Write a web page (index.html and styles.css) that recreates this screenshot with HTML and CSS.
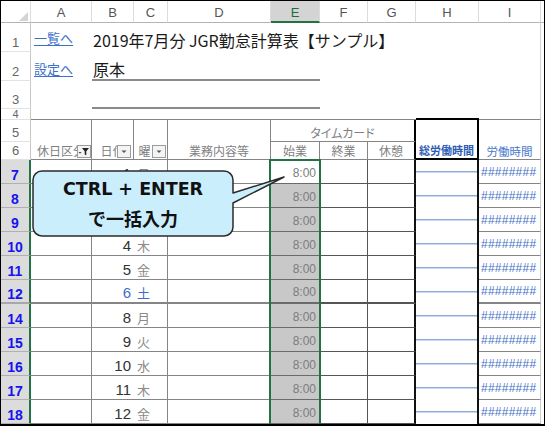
FILE: index.html
```html
<!DOCTYPE html>
<html lang="ja">
<head>
<meta charset="utf-8">
<title>JGR勤怠計算表</title>
<link rel="stylesheet" href="styles.css">
</head>
<body>
<div class="frame">
  <div class="sheet">
    <div class="row">
      <div class="ch corner"><svg width="9" height="9" viewBox="0 0 9 9"><polygon points="9,0 9,9 0,9" fill="#d4d4d4"/></svg></div>
      <div class="ch">A</div>
      <div class="ch">B</div>
      <div class="ch">C</div>
      <div class="ch">D</div>
      <div class="ch sel">E</div>
      <div class="ch">F</div>
      <div class="ch">G</div>
      <div class="ch">H</div>
      <div class="ch">I</div>
      <div class="ch last"></div>
    </div>

    <div class="row r1">
      <div class="rh">1</div>
      <div class="lk"><span>一覧へ</span></div>
      <div class="big sp7">2019年7月分 JGR勤怠計算表【サンプル】</div>
      <div class="ie"></div>
      <div class="j"></div>
    </div>
    <div class="row r2">
      <div class="rh">2</div>
      <div class="lk"><span>設定へ</span></div>
      <div class="big sp4 ul">原本</div>
      <div class="sp3"></div>
      <div class="ie"></div>
      <div class="j"></div>
    </div>
    <div class="row r3">
      <div class="rh">3</div>
      <div></div>
      <div class="sp4 ul"></div>
      <div class="sp3"></div>
      <div class="ie"></div>
      <div class="j"></div>
    </div>
    <div class="row r4">
      <div class="rh small">4</div>
      <div class="sp7 topline"></div>
      <div class="boxtop"></div>
      <div class="ie topline"></div>
      <div class="j"></div>
    </div>

    <div class="row">
      <div class="rh">5</div>
      <div class="hd rs2">休日区分<span class="fb"><svg width="12" height="11" viewBox="0 0 12 11"><polygon points="4,2 11,2 8.3,5.3 8.3,9.2 6.7,8.4 6.7,5.3" fill="#222"/><polygon points="0.5,6 3.5,6 2,7.8" fill="#444"/></svg></span></div>
      <div class="hd rs2">日付<span class="fb fb-b"><svg width="12" height="11" viewBox="0 0 12 11"><polygon points="3.5,4.5 8.5,4.5 6,7" fill="#555"/></svg></span></div>
      <div class="hd rs2">曜日<span class="fb fb-c"><svg width="12" height="11" viewBox="0 0 12 11"><polygon points="3.5,4.5 8.5,4.5 6,7" fill="#555"/></svg></span></div>
      <div class="hd rs2">業務内容等</div>
      <div class="hd sp3 tk">タイムカード</div>
      <div class="hd rs2 tot">総労働時間</div>
      <div class="hd rs2 lab">労働時間</div>
      <div class="j rs2"></div>
    </div>
    <div class="row">
      <div class="rh">6</div>
      <div class="hd">始業</div>
      <div class="hd">終業</div>
      <div class="hd tk">休憩</div>
    </div>

    <div class="row">
      <div class="rh on">7</div>
      <div class="d a"></div><div class="d b">1</div><div class="d w">月</div><div class="d dd"></div>
      <div class="d e first">8:00</div><div class="d f"></div><div class="d g"></div><div class="h"></div>
      <div class="d i">########</div><div class="j"></div>
    </div>
    <div class="row">
      <div class="rh on">8</div>
      <div class="d a"></div><div class="d b">2</div><div class="d w">火</div><div class="d dd"></div>
      <div class="d e">8:00</div><div class="d f"></div><div class="d g"></div><div class="h"></div>
      <div class="d i">########</div><div class="j"></div>
    </div>
    <div class="row">
      <div class="rh on">9</div>
      <div class="d a"></div><div class="d b">3</div><div class="d w">水</div><div class="d dd"></div>
      <div class="d e">8:00</div><div class="d f"></div><div class="d g"></div><div class="h"></div>
      <div class="d i">########</div><div class="j"></div>
    </div>
    <div class="row">
      <div class="rh on">10</div>
      <div class="d a"></div><div class="d b">4</div><div class="d w">木</div><div class="d dd"></div>
      <div class="d e">8:00</div><div class="d f"></div><div class="d g"></div><div class="h"></div>
      <div class="d i">########</div><div class="j"></div>
    </div>
    <div class="row">
      <div class="rh on">11</div>
      <div class="d a"></div><div class="d b">5</div><div class="d w">金</div><div class="d dd"></div>
      <div class="d e">8:00</div><div class="d f"></div><div class="d g"></div><div class="h"></div>
      <div class="d i">########</div><div class="j"></div>
    </div>
    <div class="row sat r12">
      <div class="rh on">12</div>
      <div class="d a"></div><div class="d b">6</div><div class="d w">土</div><div class="d dd"></div>
      <div class="d e">8:00</div><div class="d f"></div><div class="d g"></div><div class="h"></div>
      <div class="d i">########</div><div class="j"></div>
    </div>
    <div class="row">
      <div class="rh on">14</div>
      <div class="d a"></div><div class="d b">8</div><div class="d w">月</div><div class="d dd"></div>
      <div class="d e">8:00</div><div class="d f"></div><div class="d g"></div><div class="h"></div>
      <div class="d i">########</div><div class="j"></div>
    </div>
    <div class="row">
      <div class="rh on">15</div>
      <div class="d a"></div><div class="d b">9</div><div class="d w">火</div><div class="d dd"></div>
      <div class="d e">8:00</div><div class="d f"></div><div class="d g"></div><div class="h"></div>
      <div class="d i">########</div><div class="j"></div>
    </div>
    <div class="row">
      <div class="rh on">16</div>
      <div class="d a"></div><div class="d b">10</div><div class="d w">水</div><div class="d dd"></div>
      <div class="d e">8:00</div><div class="d f"></div><div class="d g"></div><div class="h"></div>
      <div class="d i">########</div><div class="j"></div>
    </div>
    <div class="row">
      <div class="rh on">17</div>
      <div class="d a"></div><div class="d b">11</div><div class="d w">木</div><div class="d dd"></div>
      <div class="d e">8:00</div><div class="d f"></div><div class="d g"></div><div class="h"></div>
      <div class="d i">########</div><div class="j"></div>
    </div>
    <div class="row last-row">
      <div class="rh on">18</div>
      <div class="d a"></div><div class="d b">12</div><div class="d w">金</div><div class="d dd"></div>
      <div class="d e">8:00</div><div class="d f"></div><div class="d g"></div><div class="h"></div>
      <div class="d i">########</div><div class="j"></div>
    </div>
  </div>

  <div class="selbox"></div>

  <div class="callout">
    <svg class="bubble" width="256" height="70" viewBox="0 0 256 70">
      <path d="M10,1 H192 A9,9 0 0 1 201,10 V23 L252,7 L201,33 V57 A9,9 0 0 1 192,66 H10 A9,9 0 0 1 1,57 V10 A9,9 0 0 1 10,1 Z" fill="#cbeefc" stroke="#2a2a2a" stroke-width="1.5" stroke-linejoin="round"/>
    </svg>
    <div class="bubble-text">
      <span class="en">CTRL + ENTER</span>
      <span class="ja">で一括入力</span>
    </div>
  </div>
</div>
</body>
</html>
```

FILE: styles.css
```css
* { box-sizing: border-box; margin: 0; padding: 0; }
html, body { background: #fff; }
body {
  width: 545px;
  height: 426px;
  overflow: hidden;
  font-family: "Noto Sans CJK JP", "Noto Sans", sans-serif;
  color: #222;
}

.frame {
  position: relative;
  width: 545px;
  height: 426px;
  border: 1px solid #000;
  border-bottom-width: 2px;
  overflow: hidden;
}

.sheet {
  display: grid;
  grid-template-columns: 30px 61px 42px 34px 103px 49px 48px 48px 63px 62px 3px;
  grid-template-rows: 22px 29px 29px 28px 11px 22px 18px repeat(11, 24px);
}
.row { display: contents; }
.row > div {
  display: flex;
  min-width: 0;
  overflow: hidden;
  white-space: nowrap;
}

.sp7 { grid-column: span 7; }
.sp4 { grid-column: span 4; }
.sp3 { grid-column: span 3; }
.rs2 { grid-row: span 2; }

/* column headers */
.ch {
  align-items: flex-end;
  justify-content: center;
  padding-bottom: 3px;
  font: 13px/13px "Liberation Sans", sans-serif;
  color: #555;
  border-right: 1px solid #dcdcdc;
  border-bottom: 1px solid #b4b4b4;
}
.ch.corner { justify-content: flex-end; padding: 0 2px 1px 0; }
.ch.sel {
  background: #d4d4d4;
  color: #1d6b3f;
  border-bottom: 2px solid #217346;
  padding-bottom: 2px;
}
.ch.last { border-right: 0; }

/* row headers */
.rh {
  justify-content: center;
  align-items: flex-end;
  padding-bottom: 2px;
  font: 13px/13px "Liberation Sans", sans-serif;
  color: #666;
  border-right: 1px solid #c8c8c8;
  border-bottom: 1px solid #e2e2e2;
}
.row > .rh.small {
  font-size: 11px;
  line-height: 10px;
  padding-bottom: 0;
  overflow: visible;
}
.rh.on {
  background: #dcdcdc;
  color: #1414ee;
  font-weight: bold;
  font-size: 14px;
  line-height: 14px;
  padding-bottom: 1px;
  border-right: 2px solid #217346;
  border-bottom: 1px solid #b0b0b0;
}

/* top area */
.lk {
  align-items: flex-end;
  padding-left: 3px;
  font-size: 13px;
  line-height: 13px;
  color: #3b6fcb;
}
.lk span { text-decoration: underline; text-underline-offset: 2px; }
.r1 .lk { padding-bottom: 8px; }
.r2 .lk { padding-bottom: 6px; }
.row > .big {
  align-items: flex-end;
  padding: 0 0 4px 1px;
  font-size: 16px;
  line-height: 16px;
  color: #1a1a1a;
  overflow: visible;
}
.r2 .big { padding-bottom: 2px; }
.ul { border-bottom: 2px solid #8a8a8a; }
.ie { border-right: 1px solid #d4d4d4; }
.topline { border-bottom: 1px solid #858585; }
.boxtop { border-bottom: 2px solid #000; }

/* table header rows 5-6 */
.row > .hd {
  position: relative;
  justify-content: center;
  align-items: flex-end;
  padding-bottom: 1px;
  font-size: 12px;
  line-height: 14px;
  color: #7f7f7f;
  font-feature-settings: "palt";
  border-right: 1px solid #858585;
  border-bottom: 1px solid #858585;
}
.hd.tk { border-right: 2px solid #000; }
.hd.tot {
  color: #2d5cb5;
  font-weight: bold;
  font-size: 11px;
  border-right: 2px solid #000;
  border-bottom: 2px solid #000;
}
.hd.lab {
  color: #4a78cc;
  font-size: 11.5px;
  border-right: 1px solid #cfcfcf;
}
.fb {
  position: absolute;
  right: 0;
  bottom: 1px;
  width: 14px;
  height: 13px;
  border: 1px solid #9c9c9c;
  background: #f4f4f4;
  display: flex;
}
.fb-b { right: 2px; }
.fb-c { right: 1px; }

/* data rows */
.d {
  border-bottom: 1px solid #858585;
  align-items: flex-end;
}
.a { border-right: 1px solid #858585; }
.b {
  justify-content: flex-end;
  padding: 0 3px 1px 0;
  font: 15px/17px "Liberation Sans", sans-serif;
  color: #333;
}
.w {
  padding: 0 0 3px 3px;
  font-size: 13px;
  line-height: 13px;
  color: #8a8a8a;
  border-right: 1px solid #858585;
}
.dd { border-right: 1px solid #858585; }
.e {
  justify-content: flex-end;
  padding: 0 4px 3px 0;
  font: 12px/14px "Liberation Sans", sans-serif;
  color: #7d7d7d;
  background: #c8c8c8;
  border-bottom-color: #6a6a6a;
}
.e.first { background: #fff; }
.f { border-right: 1px solid #555; border-bottom-color: #555; }
.g { border-right: 2px solid #111; border-bottom-color: #555; }
.h {
  border-right: 2px solid #111;
  background:
    linear-gradient(#8eaadb, #8eaadb) no-repeat 0 11px / 100% 1px,
    linear-gradient(#c9d7ef, #c9d7ef) no-repeat 0 12px / 100% 1px;
}
.i {
  padding: 0 0 4px 2px;
  font: 12px/14px "Liberation Sans", sans-serif;
  color: #4472c4;
  letter-spacing: 0.25px;
  border-right: 1px solid #cfcfcf;
}
.sat .b, .sat .w { color: #3e6ec6; }
.r12 .d { border-bottom-width: 2px; }
.r12 .rh { border-bottom: 2px solid #a8a8a8; }

/* overlays */
.selbox {
  position: absolute;
  left: 268px;
  top: 158px;
  width: 52px;
  height: 268px;
  border: 2px solid #217346;
}
.callout {
  position: absolute;
  left: 31px;
  top: 169px;
  width: 256px;
  height: 70px;
}
.bubble { display: block; }
.bubble-text {
  position: absolute;
  left: 1px;
  top: 1px;
  width: 200px;
  height: 65px;
  display: flex;
  flex-direction: column;
  align-items: center;
  justify-content: center;
  color: #111;
}
.bubble-text .en {
  font: bold 17.5px/29px "DejaVu Sans", sans-serif;
}
.bubble-text .ja {
  font: bold 18px/29px "Noto Sans CJK JP", sans-serif;
}
```
